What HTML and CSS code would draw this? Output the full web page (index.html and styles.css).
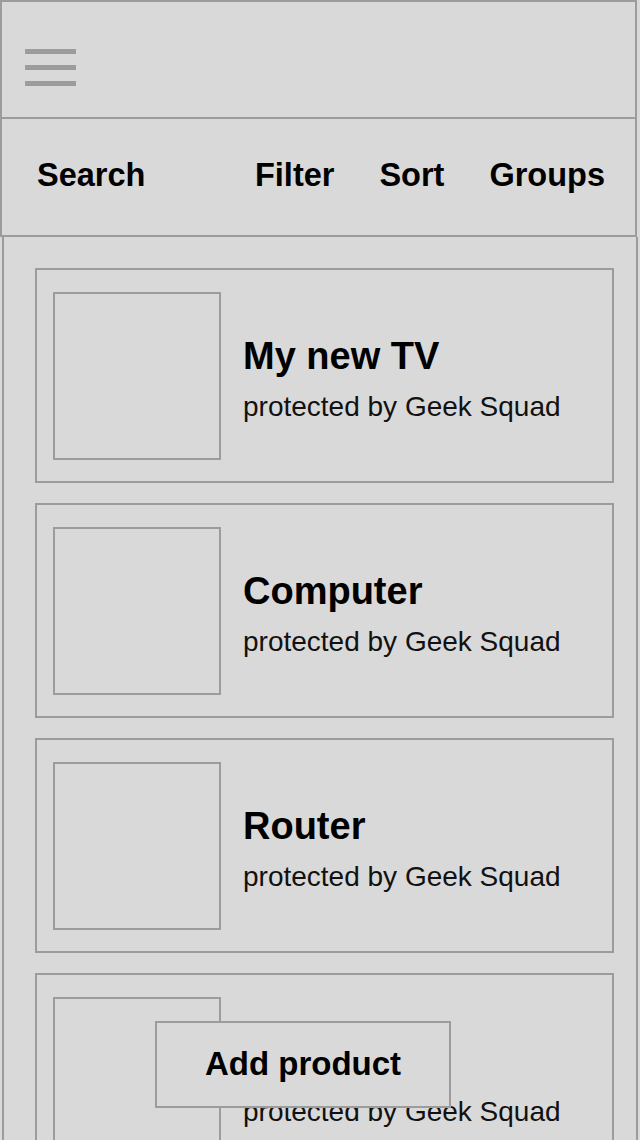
FILE: index.html
```html
<!DOCTYPE html>
<html lang="en">
<head>
<meta charset="utf-8">
<title>Products</title>
<link rel="stylesheet" href="styles.css">
</head>
<body>
<div class="app">
  <header class="topbar">
    <div class="hamburger" aria-label="Menu">
      <span class="bar"></span>
      <span class="bar"></span>
      <span class="bar"></span>
    </div>
  </header>
  <nav class="toolbar">
    <span class="tool">Search</span>
    <div class="tool-group">
      <span class="tool">Filter</span>
      <span class="tool">Sort</span>
      <span class="tool">Groups</span>
    </div>
  </nav>
  <main class="list">
    <div class="card">
      <div class="thumb"></div>
      <div class="info">
        <div class="title">My new TV</div>
        <div class="sub">protected by Geek Squad</div>
      </div>
    </div>
    <div class="card">
      <div class="thumb"></div>
      <div class="info">
        <div class="title">Computer</div>
        <div class="sub">protected by Geek Squad</div>
      </div>
    </div>
    <div class="card">
      <div class="thumb"></div>
      <div class="info">
        <div class="title">Router</div>
        <div class="sub">protected by Geek Squad</div>
      </div>
    </div>
    <div class="card">
      <div class="thumb"></div>
      <div class="info">
        <div class="title">Printer</div>
        <div class="sub">protected by Geek Squad</div>
      </div>
    </div>
  </main>
  <button class="add-btn">Add product</button>
</div>
</body>
</html>
```
FILE: styles.css
```css
* { box-sizing: border-box; }
html, body {
  margin: 0;
  padding: 0;
  background: #d9d9d9;
  overflow: hidden;
}
body {
  font-family: "Liberation Sans", Arial, sans-serif;
  color: #000;
}
.app {
  position: relative;
  width: 640px;
  height: 1140px;
  overflow: hidden;
  background: #d9d9d9;
}
.topbar {
  width: 637px;
  height: 119px;
  border: 2px solid #9c9c9c;
  padding: 47px 0 0 23px;
}
.hamburger {
  display: flex;
  flex-direction: column;
  gap: 11px;
  width: 51px;
}
.bar {
  display: block;
  height: 5px;
  background: #9c9c9c;
}
.toolbar {
  width: 637px;
  height: 118px;
  border: 2px solid #9c9c9c;
  border-top: none;
  display: flex;
  align-items: center;
  justify-content: space-between;
  padding: 0 30px 4px 35px;
}
.tool-group {
  display: flex;
  gap: 45px;
}
.tool {
  font-weight: bold;
  font-size: 32.5px;
  line-height: 1;
}
.list {
  margin-left: 2px;
  width: 636px;
  min-height: 903px;
  border-left: 2px solid #9c9c9c;
  border-right: 2px solid #9c9c9c;
  padding: 31px 0 0 31px;
  display: flex;
  flex-direction: column;
  gap: 20px;
}
.card {
  width: 579px;
  height: 215px;
  flex: none;
  border: 2px solid #9c9c9c;
  display: flex;
  align-items: center;
  padding-left: 16px;
  gap: 22px;
}
.thumb {
  width: 168px;
  height: 168px;
  flex: none;
  border: 2px solid #9c9c9c;
}
.info {
  display: flex;
  flex-direction: column;
  padding-top: 6px;
}
.title {
  font-weight: bold;
  font-size: 38px;
  line-height: 44px;
  margin-bottom: 13px;
}
.sub {
  font-size: 28px;
  line-height: 32px;
  color: #111;
}
.add-btn {
  position: absolute;
  left: 155px;
  top: 1021px;
  width: 296px;
  height: 87px;
  background: #d9d9d9;
  border: 2px solid #9c9c9c;
  font-family: "Liberation Sans", Arial, sans-serif;
  font-weight: bold;
  font-size: 33px;
  color: #000;
  padding: 0 0 2px;
}
```
